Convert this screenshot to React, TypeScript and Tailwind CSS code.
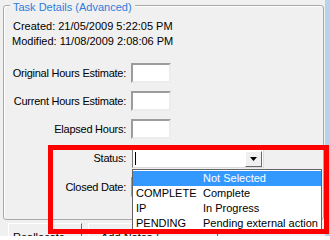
import React from "react";

const font = "font-['Liberation_Sans',Arial,sans-serif] text-[11px] leading-[15px] text-black";

function TextBox() {
  return (
    <div className="w-[40px] h-[20px] bg-white border-2 border-t-[#9c9c9c] border-l-[#9c9c9c] border-r-[#ececec] border-b-[#ececec]" />
  );
}

function FieldRow({ label, children, h = 20 }: { label: string; children: React.ReactNode; h?: number }) {
  return (
    <div className="flex items-center" style={{ height: h }}>
      <div className="w-[123px] text-right pr-[1px] tracking-[-0.25px]">{label}</div>
      {children}
    </div>
  );
}

const options = [
  { code: "", text: "Not Selected" },
  { code: "COMPLETE", text: "Complete" },
  { code: "IP", text: "In Progress" },
  { code: "PENDING", text: "Pending external action" },
];

export default function App() {
  return (
    <div className={`relative w-[330px] h-[236px] overflow-hidden bg-[#f0f0f0] flex ${font}`}>
      <div className="flex-1 flex flex-col pl-[3px] pt-[5px]">
        {/* group box */}
        <div className="relative w-[321px] h-[215px] shrink-0 border border-[#a9a9a9] rounded-[3px] shadow-[inset_1px_1px_0_#ffffff] flex flex-col pt-[13px]">
          <span className="absolute left-[6px] -top-[6px] px-[3px] bg-[#f0f0f0] text-[#2e7ddb]">
            Task Details (Advanced)
          </span>
          <div className="pl-[9px]">Created: 21/05/2009 5:22:05 PM</div>
          <div className="pl-[8px]">Modified: 11/08/2009 2:08:06 PM</div>

          <div className="mt-[14px] flex flex-col gap-[8px]">
            <FieldRow label="Original Hours Estimate:">
              <div className="ml-[4px]"><TextBox /></div>
            </FieldRow>
            <FieldRow label="Current Hours Estimate:">
              <div className="ml-[4px]"><TextBox /></div>
            </FieldRow>
            <FieldRow label="Elapsed Hours:">
              <div className="ml-[4px]"><TextBox /></div>
            </FieldRow>
          </div>

          <div className="mt-[10px]">
            <FieldRow label="Status:" h={19}>
              <div className="ml-[5px] w-[132px] h-[19px] bg-white border border-t-[#7a7a7a] border-l-[#7a7a7a] border-r-[#dcdcdc] border-b-[#dcdcdc] flex items-center pl-[2px]">
                <div className="w-[1px] h-[13px] bg-black" />
                <div className="ml-auto mr-[1px] w-[17px] h-[16px] bg-[#f0f0f0] border border-t-white border-l-white border-r-[#696969] border-b-[#696969] flex items-center justify-center">
                  <svg width="7" height="4" viewBox="0 0 7 4">
                    <path d="M0 0H7L3.5 4Z" fill="#000" />
                  </svg>
                </div>
              </div>
            </FieldRow>
          </div>

          <div className="mt-[9px]">
            <FieldRow label="Closed Date:">
              <div className="ml-[4px] w-[130px] h-[20px] bg-white border-2 border-t-[#9c9c9c] border-l-[#9c9c9c] border-r-[#ececec] border-b-[#ececec]" />
            </FieldRow>
          </div>
        </div>

        {/* bottom buttons */}
        <div className="mt-[3px] flex pl-[5px] gap-[6px]">
          <div className="w-[74px] h-[24px] border border-t-white border-l-white border-r-[#696969] border-b-[#696969] pl-[4px] pt-[6px]">
            Reallocate
          </div>
          <div className="w-[130px] h-[24px] border border-t-white border-l-white border-r-[#696969] border-b-[#696969] pl-[12px] pt-[6px]">
            Add Notes / Attachments
          </div>
        </div>
      </div>
      <div className="w-[5px] shrink-0 bg-[#b9d1ea]" />

      {/* open dropdown list */}
      <div className="absolute left-[132px] top-[169px] w-[190px] h-[65px] bg-white border border-[#646464] pt-[1px]">
        {options.map((o, i) => (
          <div
            key={o.text}
            className={`flex h-[15px] ${i === 0 ? "bg-[#3399ff] text-white" : ""}`}
          >
            <div className="w-[70px] pl-[3px]">{o.code}</div>
            <div>{o.text}</div>
          </div>
        ))}
      </div>

      {/* red annotation frame */}
      <div className="absolute left-[48px] top-[145px] w-[281px] h-[89px] border-[5px] border-[#ff0000]" />
    </div>
  );
}
